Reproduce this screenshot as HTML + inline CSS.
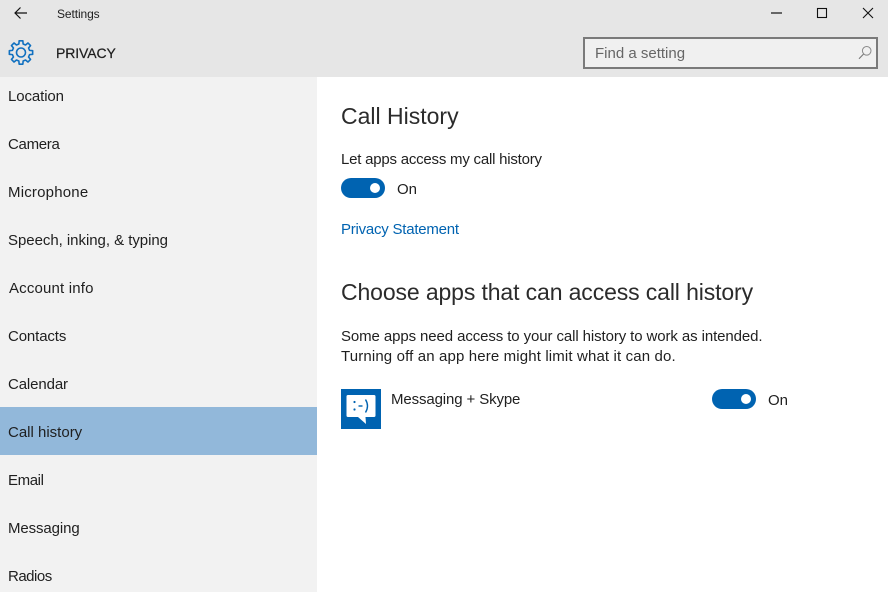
<!DOCTYPE html>
<html><head><meta charset="utf-8"><style>
html,body{margin:0;padding:0;background:#fff}
#p{position:relative;width:888px;height:592px;overflow:hidden;background:#fff;font-family:"Liberation Sans",sans-serif;color:#1f1f1f}
.t{position:absolute;white-space:nowrap;font-size:15px;line-height:20px}
.b{position:absolute}
</style></head><body><div id="p">
<div class="b" style="left:0;top:0;width:888px;height:77px;background:#e6e6e6"></div>
<div class="b" style="left:0;top:77px;width:317px;height:515px;background:#f2f2f2"></div>
<div class="b" style="left:0;top:407px;width:317px;height:48px;background:#92b8da"></div>

<svg class="b" style="left:0;top:0" width="888" height="77" fill="none">
<path d="M27 13H15M20.5 7.5L15 13L20.5 18.5" stroke="#111" stroke-width="1.2"/>
<path d="M771 13H782" stroke="#111" stroke-width="1.2"/>
<rect x="817.5" y="8.5" width="9" height="9" stroke="#111" stroke-width="1.1"/>
<path d="M863 8L873 18M873 8L863 18" stroke="#111" stroke-width="1.1"/>
<g transform="translate(21 52.5)" stroke="#1070c0" stroke-width="1.6" stroke-linejoin="round">
<circle r="4.5"/>
<path d="M2.13-8.54L1.85-11.65H-1.85L-2.13-8.54L-4.53-7.54L-6.94-9.55L-9.55-6.94L-7.54-4.53L-8.54-2.13L-11.65-1.85V1.85L-8.54 2.13L-7.54 4.53L-9.55 6.94L-6.94 9.55L-4.53 7.54L-2.13 8.54L-1.85 11.65H1.85L2.13 8.54L4.53 7.54L6.94 9.55L9.55 6.94L7.54 4.53L8.54 2.13L11.65 1.85V-1.85L8.54-2.13L7.54-4.53L9.55-6.94L6.94-9.55L4.53-7.54Z"/>
</g>
<rect x="584" y="38" width="293" height="30" fill="#f0f0f0" stroke="#7a7a7a" stroke-width="2"/>
<circle cx="866.7" cy="50.8" r="4.3" stroke="#8a8a8a" stroke-width="1"/>
<path d="M863.6 54L859 58.8" stroke="#777" stroke-width="1.1"/>
</svg>

<div class="t" style="left:57px;top:4px;font-size:12px;letter-spacing:-.1px">Settings</div>
<div class="t" style="left:56px;top:43px;font-size:14px;letter-spacing:-.1px;-webkit-text-stroke:.2px #111">PRIVACY</div>
<div class="t" style="left:595px;top:44px;color:#666;font-size:15px">Find a setting</div>

<div class="t" style="left:8px;top:87px;letter-spacing:-.1px">Location</div>
<div class="t" style="left:8px;top:135px;letter-spacing:-.3px">Camera</div>
<div class="t" style="left:8px;top:183px;letter-spacing:.2px">Microphone</div>
<div class="t" style="left:8px;top:231px;letter-spacing:-.04px">Speech, inking, &amp; typing</div>
<div class="t" style="left:9px;top:279px;letter-spacing:.17px">Account info</div>
<div class="t" style="left:8px;top:327px;letter-spacing:-.12px">Contacts</div>
<div class="t" style="left:8px;top:375px;letter-spacing:-.12px">Calendar</div>
<div class="t" style="left:8px;top:423px">Call history</div>
<div class="t" style="left:8px;top:471px;letter-spacing:-.4px">Email</div>
<div class="t" style="left:8px;top:519px;letter-spacing:-.1px">Messaging</div>
<div class="t" style="left:8px;top:567px;letter-spacing:-.5px">Radios</div>

<div class="t" style="left:341px;top:100px;font-size:23px;line-height:32px;color:#2b2b2b">Call History</div>
<div class="t" style="left:341px;top:150px;letter-spacing:-.22px">Let apps access my call history</div>
<svg class="b" style="left:341px;top:178px" width="44" height="20"><rect width="44" height="20" rx="10" fill="#0063b1"/><circle cx="34" cy="10" r="5" fill="#fff"/></svg>
<div class="t" style="left:397px;top:180px">On</div>
<div class="t" style="left:341px;top:220px;color:#0063b1;letter-spacing:-.23px">Privacy Statement</div>
<div class="t" style="left:341px;top:276px;font-size:23px;line-height:32px;letter-spacing:-.12px;color:#2b2b2b">Choose apps that can access call history</div>
<div class="t" style="left:341px;top:327px;letter-spacing:-.1px">Some apps need access to your call history to work as intended.</div>
<div class="t" style="left:341px;top:347px;letter-spacing:.14px">Turning off an app here might limit what it can do.</div>

<svg class="b" style="left:341px;top:389px" width="40" height="40">
<rect width="40" height="40" fill="#0063b1"/>
<path d="M7 6H33Q34.5 6 34.5 7.5V26.5Q34.5 28 33 28H24.5L25 35L17 28H7Q5.5 28 5.5 26.5V7.5Q5.5 6 7 6Z" fill="#fff"/>
<circle cx="13.5" cy="13" r="1.1" fill="#0063b1"/><circle cx="13.5" cy="20.5" r="1.1" fill="#0063b1"/>
<path d="M17.5 17H21.5" stroke="#0063b1" stroke-width="1.4"/>
<path d="M24.5 10.5Q28.5 17 24.5 23.5" stroke="#0063b1" stroke-width="1.4" fill="none"/>
</svg>
<div class="t" style="left:391px;top:390px;letter-spacing:-.12px">Messaging + Skype</div>
<svg class="b" style="left:712px;top:389px" width="44" height="20"><rect width="44" height="20" rx="10" fill="#0063b1"/><circle cx="34" cy="10" r="5" fill="#fff"/></svg>
<div class="t" style="left:768px;top:391px">On</div>
</div></body></html>
